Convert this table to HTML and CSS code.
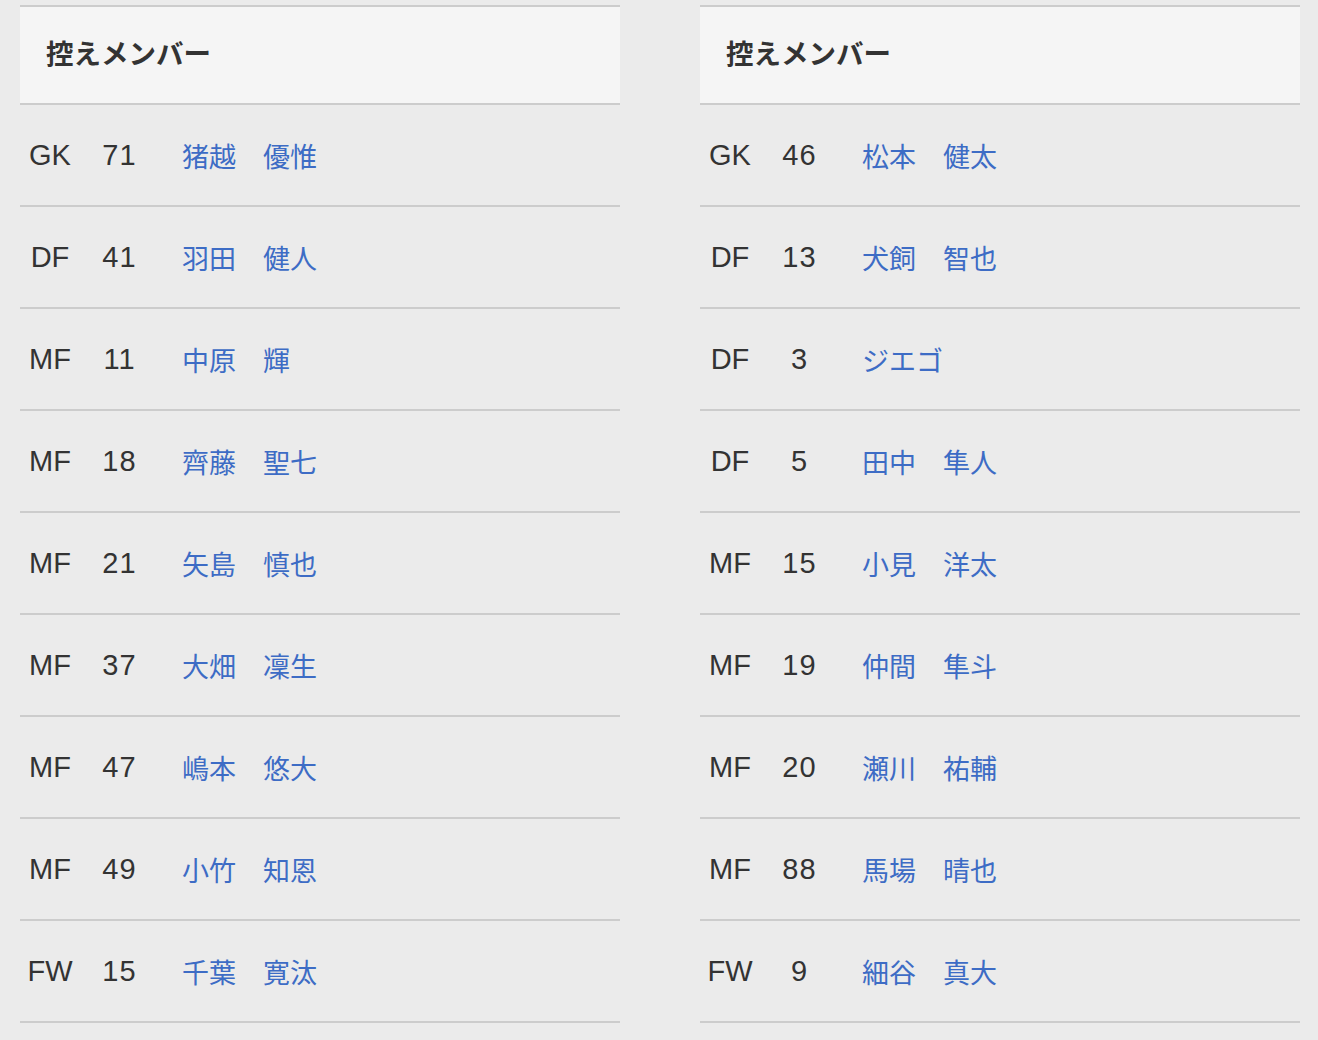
FILE: index.html
```html
<!DOCTYPE html>
<html lang="ja">
<head>
<meta charset="utf-8">
<title>控えメンバー</title>
<link rel="stylesheet" href="styles.css">
</head>
<body>
<div class="wrap">
  <section class="team">
    <h2 class="head">控えメンバー</h2>
    <ul class="list">
      <li class="row"><span class="pos">GK</span><span class="num">71</span><a class="name">猪越　優惟</a></li>
      <li class="row"><span class="pos">DF</span><span class="num">41</span><a class="name">羽田　健人</a></li>
      <li class="row"><span class="pos">MF</span><span class="num">11</span><a class="name">中原　輝</a></li>
      <li class="row"><span class="pos">MF</span><span class="num">18</span><a class="name">齊藤　聖七</a></li>
      <li class="row"><span class="pos">MF</span><span class="num">21</span><a class="name">矢島　慎也</a></li>
      <li class="row"><span class="pos">MF</span><span class="num">37</span><a class="name">大畑　凜生</a></li>
      <li class="row"><span class="pos">MF</span><span class="num">47</span><a class="name">嶋本　悠大</a></li>
      <li class="row"><span class="pos">MF</span><span class="num">49</span><a class="name">小竹　知恩</a></li>
      <li class="row"><span class="pos">FW</span><span class="num">15</span><a class="name">千葉　寛汰</a></li>
    </ul>
  </section>
  <section class="team">
    <h2 class="head">控えメンバー</h2>
    <ul class="list">
      <li class="row"><span class="pos">GK</span><span class="num">46</span><a class="name">松本　健太</a></li>
      <li class="row"><span class="pos">DF</span><span class="num">13</span><a class="name">犬飼　智也</a></li>
      <li class="row"><span class="pos">DF</span><span class="num">3</span><a class="name">ジエゴ</a></li>
      <li class="row"><span class="pos">DF</span><span class="num">5</span><a class="name">田中　隼人</a></li>
      <li class="row"><span class="pos">MF</span><span class="num">15</span><a class="name">小見　洋太</a></li>
      <li class="row"><span class="pos">MF</span><span class="num">19</span><a class="name">仲間　隼斗</a></li>
      <li class="row"><span class="pos">MF</span><span class="num">20</span><a class="name">瀬川　祐輔</a></li>
      <li class="row"><span class="pos">MF</span><span class="num">88</span><a class="name">馬場　晴也</a></li>
      <li class="row"><span class="pos">FW</span><span class="num">9</span><a class="name">細谷　真大</a></li>
    </ul>
  </section>
</div>
</body>
</html>
```
FILE: styles.css
```css
html, body {
  margin: 0;
  padding: 0;
  background: #ebebeb;
}
body {
  font-family: "Liberation Sans", "Noto Sans CJK JP", sans-serif;
  color: #333333;
}
.wrap {
  display: flex;
  gap: 80px;
  padding: 5px 0 0 20px;
}
.team {
  width: 600px;
  flex: none;
}
.head {
  margin: 0;
  box-sizing: content-box;
  height: 92px;
  border-top: 2px solid #cccccc;
  border-bottom: 2px solid #cccccc;
  background: #f5f5f5;
  padding: 0 0 4px 26px;
  display: flex;
  align-items: center;
  font-family: "Noto Sans CJK JP", sans-serif;
  font-size: 27.5px;
  font-weight: 700;
  color: #333333;
  line-height: 1;
}
.list {
  list-style: none;
  margin: 0;
  padding: 0;
}
.row {
  display: grid;
  grid-template-columns: 60px 78px 1fr;
  align-items: center;
  height: 100px;
  border-bottom: 2px solid #cccccc;
  font-size: 29px;
  line-height: 1;
}
.pos, .num {
  text-align: center;
}
.num {
  letter-spacing: 1px;
  padding-left: 1px;
}
.name {
  padding-left: 24px;
  color: #3d6cc5;
  font-size: 27px;
  font-family: "Noto Sans CJK JP", sans-serif;
}
```
